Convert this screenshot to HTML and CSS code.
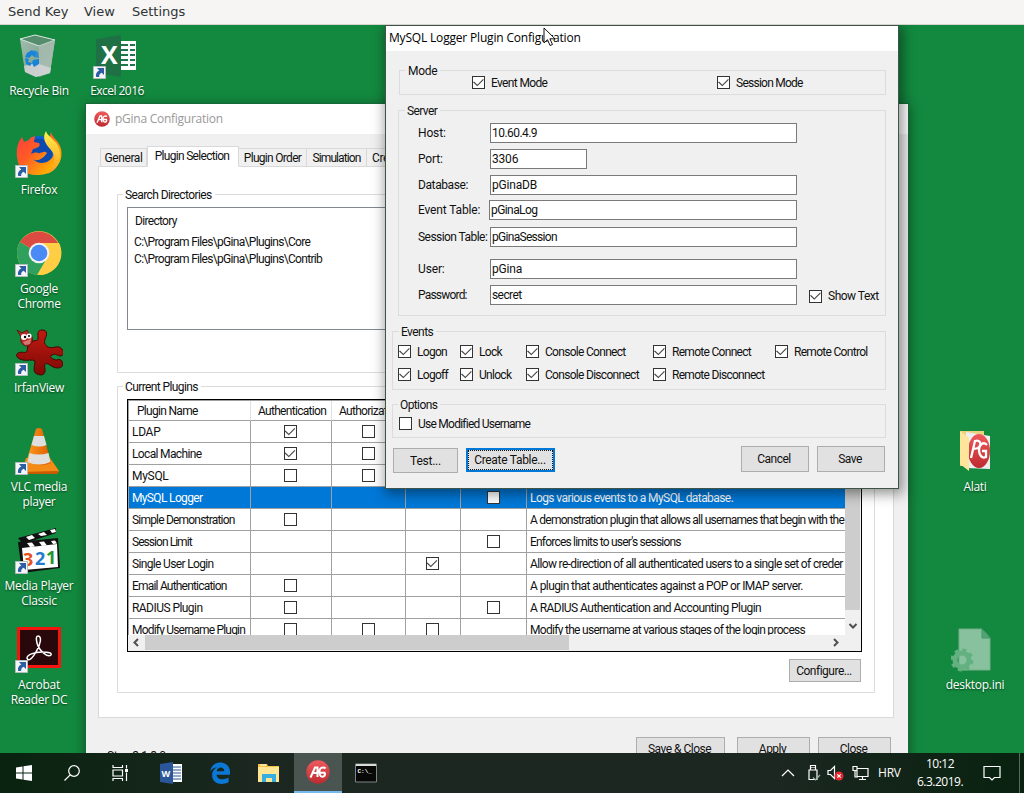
FILE: index.html
```html
<!DOCTYPE html>
<html lang="en">
<head>
<meta charset="utf-8">
<title>Remote desktop</title>
<link rel="stylesheet" href="styles.css">
</head>
<body>
<svg class="defs" aria-hidden="true">
  <defs>
    <linearGradient id="redball" x1="0" y1="0" x2="0" y2="1"><stop offset="0" stop-color="#ee5a5c"/><stop offset="1" stop-color="#bd2b31"/></linearGradient>
    <linearGradient id="fox" x1="0" y1="0" x2=".9" y2=".8"><stop offset="0" stop-color="#ff3b47"/><stop offset=".45" stop-color="#ff5a25"/><stop offset="1" stop-color="#ffb900"/></linearGradient>
    <linearGradient id="foxtail" x1="0" y1="0" x2="0" y2="1"><stop offset="0" stop-color="#fff04f"/><stop offset="1" stop-color="#ff9a1a"/></linearGradient>
    <linearGradient id="glass" x1="0" y1="0" x2="1" y2="1"><stop offset="0" stop-color="#a5bfb2"/><stop offset=".5" stop-color="#86a996"/><stop offset="1" stop-color="#b9c8bf"/></linearGradient>
    <linearGradient id="cone" x1="0" y1="0" x2="1" y2="0"><stop offset="0" stop-color="#ff9a1f"/><stop offset="1" stop-color="#dd5c00"/></linearGradient>
    <linearGradient id="splat" x1="0" y1="0" x2="0" y2="1"><stop offset="0" stop-color="#c01b12"/><stop offset="1" stop-color="#7f0805"/></linearGradient>
  </defs>
  <symbol id="pg" viewBox="0 0 24 24">
    <circle cx="12" cy="12" r="11.7" fill="url(#redball)"/>
    <path d="M4.500 17.500 9 7.500h2.500v9.500M7.500 13H11M19.500 8.500c-1.500-1.800-5.600-1.300-6 2.200-.4 4 1 6.100 3.200 6 2-.1 2.400-1.700 2.400-3.700M14 12.700h5.500" fill="none" stroke="#fff" stroke-width="2"/>
  </symbol>
  <symbol id="shortcut" viewBox="0 0 13 13">
    <path d="M.5.5h12v12H.5z" fill="#f3f5f7" stroke="#b5bcc0"/>
    <path d="M4 2h7v7L8.700 6.800C6.600 7.700 6 9 6.200 11H3.300C2.300 8 3.800 5.600 6.300 4.400Z" fill="#2d5da2"/>
  </symbol>
</svg>

<nav class="menubar"><span class="m1">Send Key</span><span class="m2">View</span><span class="m3">Settings</span></nav>

<main class="desktop">
  <section class="icons icons-left">
    <div class="shortcut">
      <svg viewBox="-2 0 48 48"><path d="M3 8 18 4l20 5-5 33-14 4-11-5Z" fill="url(#glass)"/><path d="M3 8 18 4l20 5-16 6Z" fill="#558d6d" stroke="#dae5df"/><path d="M22 15v31l11-4 5-33Z" fill="#a8bbb0" opacity=".8"/><path d="m7 35 12-3 15 5-1 5-14 4-11-5Z" fill="#d5d5d7" opacity=".85"/><g fill="#1685d9"><path d="m10 22 5-3 4 3-2 4-2-2-3 3-4-1Z"/><path d="m17 19 4 2 1 6-5-1Z" opacity=".8"/><path d="m8 27 4 1-1 3 4 1-2 3-4-2Z"/><path d="m16 29 6-1 0 5-5 3-2-4Z"/></g></svg>
      <span>Recycle Bin</span>
    </div>
    <div class="shortcut">
      <svg viewBox="0 0 48 48"><circle cx="24.500" cy="23" r="17" fill="#0b62d0"/><path d="M10 16c8-12 26-9 27 6s-14 18-22 14Z" fill="#10328e" opacity=".5"/><path d="M2 27C1 18 3 12 7 7l2 5 5-2c1-3 4-3 6-4l-1 6 5 1c2 3-1 5-6 6l-2 5c2-1 5-2 7-1 3 1 6-3 9 0-4 6-10 9-14 6 6 7 17 4 20-3 2-6 1-11-3-16 0-3 0-6 1-8 1 6 8 8 10 17 3 15-9 26-22 26C10 46 3 38 2 27Z" fill="url(#fox)"/><path d="M31 1c1 6 14 10 14 23 0 11-5 17-13 20 8-9 10-17 4-24-8-8-8-14-5-19Z" fill="url(#foxtail)"/><use href="#shortcut" x="0" y="35" width="13" height="13"/></svg>
      <span>Firefox</span>
    </div>
    <div class="shortcut">
      <svg viewBox="0 0 48 48"><circle cx="24" cy="24" r="22" fill="#f9d044"/><path d="M24 24 5 13A22 22 0 0 0 22 46l10-17Z" fill="#2fa05e"/><path d="M24 24 5 13A22 22 0 0 1 43 14H24Z" fill="#dc4b41"/><path d="M24 14h20a22 22 0 0 1-20 32l9-18Z" fill="#ffce44"/><circle cx="24" cy="24" r="10.300" fill="#f4f4f4"/><circle cx="24" cy="24" r="8.300" fill="#4a8af4"/><use href="#shortcut" x="0" y="35" width="13" height="13"/></svg>
      <span>Google<br>Chrome</span>
    </div>
    <div class="shortcut">
      <svg viewBox="0 0 48 48"><path d="M18 13c4-1 5 0 5-3 0-4-1-8 4-8 6 0 5 5 3 9-1 4 0 6 3 8 5 2 7-1 11 0 5 2 6 8 2 9-4 0-5-3-9-1-4 2 2 5 5 5 3-2 6 1 6 5-2 4-8 4-13 0-5-3-6-1-5 4 1 6-4 7-8 5-5-2-2-9-2-13-3-2-7 0-12-1-6-1-8-5-5-7 4-2 8 1 9-2 1-4 0-8 6-10Z" fill="url(#splat)" stroke="#420604"/><path d="m2 2 5 3 5-3 2 4c5 2 4 8 1 11-4 3-11-1-9-8Z" fill="#bb2a23" stroke="#54100c" stroke-width=".8"/><circle cx="9" cy="9" r="3" fill="#fff"/><circle cx="14" cy="8" r="2.600" fill="#fff"/><circle cx="10" cy="9" r="1.200"/><circle cx="14" cy="8" r="1"/><path d="m8 14 8-3-1 5-5 1Z" fill="#d37975"/><use href="#shortcut" x="0" y="35" width="13" height="13"/></svg>
      <span>IrfanView</span>
    </div>
    <div class="shortcut">
      <svg viewBox="0 0 48 48"><path d="M11 31h24l9 13-2 2H6l2-6Z" fill="#f38b16"/><path d="m6 45 36-1 2 1-2 2H7Z" fill="#c85b00"/><path d="M21 2q3-2 6 0l9 34q-12 5-25 0Z" fill="url(#cone)"/><path d="m19 9 10 0 2.500 9q-7 3-15 0ZM14.500 26q9 3 19 0l2 9q-12 5-23 0Z" fill="#dfdfdf"/><use href="#shortcut" x="0" y="35" width="13" height="13"/></svg>
      <span>VLC media<br>player</span>
    </div>
    <div class="shortcut">
      <svg viewBox="0 0 48 48"><path d="M3 12 41 2v5L8 18Z" fill="#111"/><path d="m11 11 6-2 3 3-6 2Zm12-3 6-2 3 3-6 1Zm12-4 5-1 1 3-4 1Z" fill="#fff"/><path d="M3 16 43 12l2 30-38 5Z" fill="#111"/><path d="m7 22 35-4 1 23-34 3Z" fill="#fff"/><path d="m12 17 5-.500 3 4-5 .500Zm12-1 5-.500 3 4-5 .500Zm12-1 4-.500 2 3-4 .500Z" fill="#fff"/><g class="numerals"><text x="8" y="40" fill="#e84f20">3</text><text x="20" y="39" fill="#247acc">2</text><text x="31" y="38" fill="#219630">1</text></g><use href="#shortcut" x="0" y="35" width="13" height="13"/></svg>
      <span>Media Player<br>Classic</span>
    </div>
    <div class="shortcut">
      <svg viewBox="0 0 48 48"><path d="M3.500 3.500h41v38h-41z" fill="#28080a" stroke="#f5140e" stroke-width="3"/><path d="M23 11c4 0 3 8-2 16-4 7-8 10-9 6 0-3 7-6 15-6 7 0 10 1 9 3-3 3-12-4-14-12-1-4-1-7 1-7Z" fill="none" stroke="#fff" stroke-width="1.500"/><use href="#shortcut" x="0" y="35" width="13" height="13"/></svg>
      <span>Acrobat<br>Reader DC</span>
    </div>
  </section>
  <section class="icons">
    <div class="shortcut">
      <svg viewBox="0 0 48 48"><path d="M27 10h16v29H27z" fill="#fff"/><path d="M27 14h15M27 19h15M27 24h15M27 29h15M27 34h15" stroke="#20744a" stroke-width="2"/><path d="M36 10v28" stroke="#fff" stroke-width="2"/><path d="m3 8 25-4v42L3 42Z" fill="#1f7145"/><text x="8" y="33" class="xl">X</text><use href="#shortcut" x="0" y="35" width="13" height="13"/></svg>
      <span class="k5">Excel 2016</span>
    </div>
  </section>
  <section class="icons icons-right">
    <div class="shortcut">
      <svg viewBox="0 0 48 48"><path d="M9 4h24v35H9Z" fill="#ead27f"/><path d="m15 5 24 4v33l-24-1Z" fill="#eee"/><ellipse cx="28" cy="24" rx="11" ry="17" fill="url(#redball)"/><path d="m20 31 4-17c6-2 7 5 3 7l-4 1M36 18c-4-4-8 0-8 5s3 9 7 7v-6h-4" fill="none" stroke="#fff" stroke-width="2.300"/><path d="m9 4 9 7v33l-9-7Z" fill="#ffe59b"/></svg>
      <span>Alati</span>
    </div>
    <div class="shortcut blank"></div>
    <div class="shortcut">
      <svg viewBox="2 0 48 48"><path d="M10 4h23l8 9v32H10Z" fill="#88c19d" stroke="#76af8b"/><path d="M33 4v9h8Z" fill="#52a474" stroke="#459768"/><circle cx="13" cy="35" r="7" fill="none" stroke="#63b080" stroke-width="5"/><circle cx="13" cy="35" r="10" fill="none" stroke="#63b080" stroke-width="3" stroke-dasharray="4 3.850"/></svg>
      <span>desktop.ini</span>
    </div>
  </section>

  <article class="window main-window">
    <header><svg><use href="#pg"/></svg>pGina Configuration</header>
    <div class="tabs"><span class="tab t1">General</span><span class="tab t2 selected">Plugin Selection</span><span class="tab t3">Plugin Order</span><span class="tab t4">Simulation</span><span class="tab t5">Cre</span></div>
    <div class="page">
      <fieldset class="search"><legend>Search Directories</legend>
        <div class="listbox"><p class="dir-head">Directory</p><p>C:\Program Files\pGina\Plugins\Core</p><p>C:\Program Files\pGina\Plugins\Contrib</p></div>
      </fieldset>
      <fieldset class="plugins"><legend>Current Plugins</legend>
        <div class="datagrid">
          <div class="viewport">
            <div class="row head"><b>Plugin Name</b><b>Authentication</b><b>Authorization</b><b></b><b></b><b></b></div>
            <div class="row"><b class="k3">LDAP</b><b><input type="checkbox" checked></b><b><input type="checkbox"></b><b></b><b></b><b></b></div>
            <div class="row"><b>Local Machine</b><b><input type="checkbox" checked></b><b><input type="checkbox"></b><b></b><b></b><b></b></div>
            <div class="row"><b class="k3">MySQL</b><b><input type="checkbox"></b><b><input type="checkbox"></b><b></b><b></b><b></b></div>
            <div class="row active"><b>MySQL Logger</b><b></b><b></b><b></b><b><input type="checkbox"></b><b class="k5">Logs various events to a MySQL database.</b></div>
            <div class="row"><b class="k8">Simple Demonstration</b><b><input type="checkbox"></b><b></b><b></b><b></b><b class="k75">A demonstration plugin that allows all usernames that begin with the</b></div>
            <div class="row"><b class="k9">Session Limit</b><b></b><b></b><b></b><b><input type="checkbox"></b><b class="k8">Enforces limits to user's sessions</b></div>
            <div class="row"><b>Single User Login</b><b></b><b></b><b><input type="checkbox" checked></b><b></b><b>Allow re-direction of all authenticated users to a single set of creder</b></div>
            <div class="row"><b class="k8">Email Authentication</b><b><input type="checkbox"></b><b></b><b></b><b></b><b class="k6">A plugin that authenticates against a POP or IMAP server.</b></div>
            <div class="row"><b class="k5">RADIUS Plugin</b><b><input type="checkbox"></b><b></b><b></b><b><input type="checkbox"></b><b class="k5">A RADIUS Authentication and Accounting Plugin</b></div>
            <div class="row"><b class="k8">Modify Username Plugin</b><b><input type="checkbox"></b><b><input type="checkbox"></b><b><input type="checkbox"></b><b></b><b class="k7">Modify the username at various stages of the login process</b></div>
          </div>
          <div class="vscroll"><i></i><svg viewBox="0 0 15 25"><path d="m4.500 14 3.500 3.500 3.500-3.500"/></svg></div>
          <div class="hscroll"><svg viewBox="0 0 16 15"><path d="M10 4 6.500 7.500 10 11"/></svg><i></i><svg viewBox="0 0 16 15"><path d="m7 4 3.500 3.500L7 11"/></svg></div>
        </div>
        <button class="configure">Configure...</button>
      </fieldset>
    </div>
    <footer><span class="version">Stop 3.1.8.0</span><button>Save &amp; Close</button><button>Apply</button><button>Close</button></footer>
  </article>

  <article class="window dialog">
    <header>MySQL Logger Plugin Configuration</header>
    <form>
      <fieldset class="mode"><legend class="k3">Mode</legend><label>Event Mode<input type="checkbox" checked></label><label>Session Mode<input type="checkbox" checked></label></fieldset>
      <fieldset class="server"><legend>Server</legend>
        <div class="field"><span>Host:</span><input class="k5" value="10.60.4.9"></div>
        <div class="field port"><span>Port:</span><input value="3306"></div>
        <div class="field"><span class="k4">Database:</span><input value="pGinaDB"></div>
        <div class="field evt"><span>Event Table:</span><input class="k6" value="pGinaLog"></div>
        <div class="field ses"><span class="k5">Session Table:</span><input class="k7" value="pGinaSession"></div>
        <div class="field usr"><span>User:</span><input value="pGina"></div>
        <div class="field"><span class="k8">Password:</span><input class="k6" value="secret"><label class="show">Show Text<input type="checkbox" checked></label></div>
      </fieldset>
      <fieldset class="events"><legend class="k5">Events</legend>
        <div class="event-grid">
          <label>Logon<input type="checkbox" checked></label><label>Lock<input type="checkbox" checked></label><label>Console Connect<input type="checkbox" checked></label><label>Remote Connect<input type="checkbox" checked></label><label>Remote Control<input type="checkbox" checked></label>
          <label>Logoff<input type="checkbox" checked></label><label>Unlock<input type="checkbox" checked></label><label>Console Disconnect<input type="checkbox" checked></label><label>Remote Disconnect<input type="checkbox" checked></label>
        </div>
      </fieldset>
      <fieldset class="options"><legend>Options</legend><label>Use Modified Username<input type="checkbox"></label></fieldset>
      <div class="actions"><button type="button" class="test">Test...</button><button type="button" class="create">Create Table...</button><button type="button" class="cancel">Cancel</button><button type="button" class="save">Save</button></div>
    </form>
  </article>
  <svg class="cursor" viewBox="0 0 13 20"><path d="M1 1v15l3.500-3.300L7 18.500l2.500-1-2.600-5.700H12Z" fill="#fff" stroke="#111"/></svg>
</main>

<footer class="taskbar">
  <div class="cell"><svg viewBox="0 0 16 16"><path d="m0 2.500 6.500-1V7.500H0Zm7.500-1.200L16 0v7.500H7.500ZM0 8.500h6.500v6L0 13.500Zm7.500 0H16V16l-8.500-1.300Z" fill="#fff"/></svg></div>
  <div class="cell"><svg viewBox="0 0 16 16" class="line"><circle cx="10" cy="6" r="5.300"/><path d="M6.200 9.800.5 15.500"/></svg></div>
  <div class="cell"><svg viewBox="0 0 16 16" class="line"><path d="M1 0v2.500h9.500V0M1 5h9.500v6H1ZM1 16v-2.500h9.500V16M14.500 0v3.500M14.500 7.500V16"/><path d="M13 4h3v3h-3z" fill="#fff" stroke="none"/></svg></div>
  <div class="cell gap first"><svg class="big" viewBox="0 0 24 24"><path d="M13 3h10v18H13z" fill="#fff"/><path d="M14 6h8M14 9h8M14 12h8M14 15h8M14 18h8" stroke="#2b579a"/><path d="M1 3 14 1v22L1 21Z" fill="#2b579a"/><text x="2.500" y="15.500" class="wd">W</text></svg></div>
  <div class="cell gap"><svg class="big" viewBox="0 0 24 24"><path d="M2 10.500C3.400 4.500 7.400 1.500 12.300 1.500c6 0 9.700 4.300 9.700 9.500v2.700H8.600c.2 5.400 7.400 5.500 12 2.900v4.700c-7.700 3.900-16.500 1-16.500-7 0-4.300 2.200-6.700 5.200-8.100C5.600 6.800 3.500 8.300 2 10.500Zm6.700-.2h7.600c0-5.100-7.100-4.700-7.600 0Z" fill="#0c78d5"/></svg></div>
  <div class="cell gap"><svg class="big" viewBox="0 0 24 24"><path d="M1 3h9l1 2h11v16H1z" fill="#f6c243"/><path d="M1 6h21v15H1z" fill="#ffe694"/><path d="M5 21v-8h14v8h-4v-4H9v4Z" fill="#35aee2"/><path d="M3 4h6" stroke="#fff"/></svg></div>
  <div class="cell gap running"><svg class="big"><use href="#pg"/></svg></div>
  <div class="cell"><svg class="big" viewBox="0 0 24 24"><path d="M1.500 3h21v18h-21z" fill="#080808" stroke="#7f8583"/><path d="M2 4h20" stroke="#d8dddb" stroke-width="2"/><text x="3.500" y="11.500" class="cmd">C:\_</text></svg></div>
  <div class="tray">
    <svg viewBox="0 0 14 8" class="line chev"><path d="m1 7 6-6 6 6"/></svg>
    <svg viewBox="0 0 14 18" class="line usb"><path d="M3.500 6V1.500h5V6M2 6h8v9.500H2zM5 3v1M7 3v1"/><path d="m6 13.500 2.500 2.500 4.500-5" stroke="#9bb3a3"/></svg>
    <svg viewBox="0 0 17 16" class="line vol"><path d="M1 5.500h2.500l4-4v12l-4-4H1Z"/><circle cx="12" cy="11" r="4.500" fill="#e32831" stroke="none"/><path d="m10.300 9.300 3.400 3.400m0-3.400-3.400 3.400"/></svg>
    <svg viewBox="0 0 17 16" class="line net"><path d="M5 3.500h11v8H5zM10.500 12v2.500M7 14.500h7M1 1.500h4v4H1zM3 6v6h3"/></svg>
    <span class="lang">HRV</span>
    <time><span>10:12</span><span>6.3.2019.</span></time>
    <svg viewBox="0 0 18 17" class="line note"><path d="M1 1.500h16v11h-5.500L9 15l-2.500-2.500H1Z"/></svg>
    <i class="peek"></i>
  </div>
</footer>
</body>
</html>
```
FILE: styles.css
```css
* { box-sizing: border-box; }
html, body { margin: 0; width: 1024px; height: 793px; overflow: hidden; }
body { display: flex; flex-direction: column; font: 12px/14px Roboto, "Liberation Sans", sans-serif; color: #111; background: #13893f; }
.defs { position: absolute; width: 0; height: 0; }
.menubar { flex: 0 0 25px; display: flex; background: #f6f5f4; border-bottom: 1px solid #d5d2ce; padding-left: 8px; font: 13px/24px "DejaVu Sans", sans-serif; color: #2e3436; }
.m1 { width: 76px; }
.m2 { width: 48px; }
.desktop { flex: 0 0 728px; position: relative; display: flex; background: #13893f; overflow: hidden; }

.icons { width: 78px; padding-top: 6px; display: flex; flex-direction: column; }
.icons-right { margin-left: auto; margin-right: 10px; padding-top: 402px; }
.shortcut { height: 99px; flex: none; display: flex; flex-direction: column; align-items: center; gap: 4px; color: #fff; text-align: center; white-space: nowrap; letter-spacing: -.28px; }
.shortcut svg { width: 48px; height: 48px; }
.shortcut span { font: 12px/15px "Open Sans", sans-serif; text-shadow: 0 1px 2px #033d17; }
.numerals { font: bold 18px "Open Sans", sans-serif; }
.xl { font: bold 25px "Open Sans", sans-serif; fill: #fff; }

.window { position: absolute; display: flex; flex-direction: column; background: #f0f0f0; }
.window header { background: #fff; font-family: "Open Sans", sans-serif; white-space: nowrap; letter-spacing: -.18px; }
.main-window { left: 86px; top: 79px; width: 822px; height: 700px; z-index: 1; box-shadow: 0 0 0 1px #17693a, 0 2px 12px rgba(0,0,0,.45); }
.main-window header { height: 30px; flex: none; display: flex; align-items: center; gap: 5px; padding-left: 8px; color: #999; line-height: 30px; letter-spacing: -.26px; }
.main-window header svg { width: 16px; height: 16px; }

.tabs { display: flex; align-items: flex-end; height: 33px; flex: none; padding-left: 14px; margin-bottom: -1px; z-index: 1; }
.tab { height: 19px; border: 1px solid #d9d9d9; border-left: 0; text-align: center; line-height: 19px; white-space: nowrap; overflow: hidden; letter-spacing: -.7px; }
.t1 { width: 47px; border-left: 1px solid #d9d9d9; letter-spacing: -.4px; }
.t2 { width: 92px; padding-right: 2px; }
.t3 { width: 68px; }
.t4 { width: 60px; letter-spacing: -.9px; }
.t5 { width: 110px; text-align: left; padding-left: 5px; letter-spacing: -.4px; }
.tab.selected { height: 21px; background: #fff; border-left: 1px solid #d9d9d9; border-bottom-color: #fff; line-height: 19px; }

.page { margin: 0 14px 0 12px; height: 552px; flex: none; background: #fff; border: 1px solid #d9d9d9; padding: 21px 18px 0; }
fieldset { margin: 0; min-width: 0; border: 1px solid #dcdcdc; padding: 0; }
legend { height: 13px; line-height: 14px; padding: 0 3px 0 2px; margin-left: 6px; white-space: nowrap; letter-spacing: -.6px; }
.search { height: 185px; width: 758px; margin-bottom: 7px; padding: 6px 10px 0 9px; }
.search legend, .plugins legend { margin-left: -4px; }
.listbox { height: 123px; border: 1px solid #828790; padding: 6px 7px; white-space: nowrap; letter-spacing: -.68px; }
.listbox p { margin: 0 0 0 -1px; line-height: 17px; }
.listbox .dir-head { line-height: 14px; margin: 0 0 6px; }
.plugins { height: 313px; width: 758px; padding: 6px 13px 0 9px; display: block; }
.datagrid { width: 735px; height: 253px; border: 1px solid #000; display: grid; grid-template: 235px 16px / 717px 16px; background: #f0f0f0; }
.viewport { overflow: hidden; background: #fff; border-left: 1px solid #a0a0a0; border-top: 1px solid #a0a0a0; }
.row { display: grid; grid-template-columns: 122px 81px 74px 55px 66px 318px; height: 22px; letter-spacing: -.65px; }
.row b { font-weight: normal; border-right: 1px solid #a0a0a0; border-bottom: 1px solid #a0a0a0; padding-left: 3px; line-height: 22px; white-space: nowrap; overflow: hidden; }
.row b:last-child { border-right: 0; }
.row b:nth-child(n+2):nth-child(-n+5) { display: flex; align-items: center; justify-content: center; padding: 0 2px 0 0; }
.row b:nth-child(3), .row b:nth-child(5) { padding-right: 0 !important; }
.row.head { height: 20px; letter-spacing: -.7px; }
.row.head b { border-right-color: #e0e0e0; line-height: 20px; padding-left: 8px; }
.row.head b:nth-child(n+2):nth-child(-n+5) { justify-content: flex-start; padding-left: 7px; }
.row.active b { background: #0078d7; color: #fff; }
.vscroll { display: flex; flex-direction: column; }
.vscroll i { height: 210px; width: 15px; flex: none; background: #cdcdcd; }
.vscroll svg { width: 15px; height: 25px; flex: none; }
.hscroll { grid-column: 1 / 3; display: flex; }
.hscroll i { width: 424px; height: 15px; background: #cdcdcd; margin: 0 258px 0 1px; }
.hscroll svg { width: 16px; height: 15px; }
.vscroll svg, .hscroll svg { fill: none; stroke: #505050; stroke-width: 2; }

button { font: inherit; color: #111; background: #e1e1e1; border: 1px solid #adadad; padding: 0; letter-spacing: -.5px; white-space: nowrap; }
.configure { display: block; width: 72px; height: 23px; margin: 7px 0 0 662px; padding-right: 2px; }
.main-window footer { display: flex; padding: 19px 17px 0 21px; }
.version { margin: 12px auto 0 0; letter-spacing: -.45px; }
.main-window footer button { height: 24px; width: 73px; margin-left: 8px; padding: 0 2px 1px 0; }
.main-window footer button:nth-of-type(1) { width: 89px; margin-right: 4px; }

.dialog { left: 385px; top: 0; width: 514px; height: 464px; z-index: 2; border: 1px solid #3f5547; box-shadow: 2px 3px 12px 2px rgba(0,0,0,.42); }
.dialog header { height: 25px; flex: none; line-height: 24px; padding-left: 3px; color: #000; }
.dialog form { padding: 13px 12px 0 6px; }
input { font: inherit; color: #111; margin: 0; }
input:not([type]) { width: 307px; height: 20px; border: 1px solid #7a7a7a; background: #fff; padding: 0 1px; }
[type=checkbox] { appearance: none; width: 13px; height: 13px; flex: none; border: 1px solid #333; background: #fff; }
[type=checkbox]:checked::before { content: ""; display: block; width: 11px; height: 11px; background: #444; clip-path: polygon(0 5.300px, 1px 4.400px, 4.300px 7.700px, 10px 2px, 10.800px 2.800px, 4.300px 9.300px); }
label { display: flex; flex-direction: row-reverse; justify-content: flex-end; align-items: center; gap: 6px; height: 13px; white-space: nowrap; letter-spacing: -.7px; }
.mode { height: 31px; margin-left: 7px; }
.mode label { float: left; width: 76px; margin: -1px 0 0 72px; letter-spacing: -.65px; }
.mode label + label { width: 90px; margin-left: 169px; letter-spacing: -.75px; }
.server { height: 212px; margin: 9px 0 0 6px; padding: 6px 0 0 19px; }
.server legend { margin-left: -13px; }
.field { display: flex; align-items: center; height: 20px; margin-bottom: 6px; letter-spacing: -.15px; }
.field > span { width: 72px; flex: none; white-space: nowrap; }
.field > input { flex: none; letter-spacing: -.2px; }
.port > input:not([type]) { width: 97px; }
.evt { margin: -1px 0 7px; }
.evt > span { width: 71px; }
.evt > input:not([type]) { width: 308px; }
.usr { margin-top: 12px; }
.show { margin: 2px 0 0 12px; height: 17px; width: 77px; background: #f0f0f0; z-index: 1; letter-spacing: -.5px; }
.events { height: 65px; margin-top: 9px; }
.event-grid { display: grid; grid-template-columns: 62px 66px 127px 122px 100px; row-gap: 10px; padding: 7px 0 0 5px; }
.options { height: 40px; margin-top: 8px; padding: 6px 0 0 6px; }
.options legend { margin-left: -1px; }
.options label { letter-spacing: -.75px; }
.actions { display: flex; align-items: flex-start; padding: 8px 1px 0 1px; }
.test { width: 65px; height: 25px; margin: 2px 8px 0 0; letter-spacing: -.25px; }
.create { width: 89px; height: 24px; margin-top: 2px; border: 2px solid #0078d7; outline: 1px dotted #111; outline-offset: -3px; letter-spacing: -.3px; padding-right: 1px; }
.cancel { width: 68px; height: 26px; margin-left: auto; padding-right: 2px; }
.save { width: 68px; height: 26px; margin-left: 8px; padding-right: 2px; }
.cursor { position: absolute; z-index: 3; left: 543px; top: 2px; width: 13px; height: 20px; }

/* Tracking steps for captions set tighter or looser than their container */
.row .k3, .k3 { letter-spacing: -.3px; }
.row .k4, .field > .k4 { letter-spacing: -.4px; }
.row .k5, .field > .k5, .k5 { letter-spacing: -.55px; }
.row .k6, .field > .k6 { letter-spacing: -.58px; }
.row .k7, .field > .k7 { letter-spacing: -.7px; }
.row .k75 { letter-spacing: -.75px; }
.row .k8, .field > .k8 { letter-spacing: -.8px; }
.row .k9 { letter-spacing: -.95px; }
.active > .k5 { letter-spacing: -.57px; }

.taskbar { flex: 0 0 40px; display: flex; background: linear-gradient(90deg, #09230f, #1b2720 25%, #1c2721 75%, #08220f); color: #fff; }
.cell { width: 48px; height: 40px; display: flex; align-items: center; justify-content: center; }
.cell.gap { margin-left: 1px; }
.cell.first { margin-left: 3px; }
.cell svg { width: 16px; height: 16px; }
.cell svg.big { width: 24px; height: 24px; }
.running { background: #4a5450; border-bottom: 2px solid #76b9ed; }
.line { fill: none; stroke: #fff; stroke-width: 1.200; }
.wd { font: bold 9px "Open Sans", sans-serif; fill: #fff; }
.cmd { font: bold 6px "Liberation Mono", monospace; fill: #fff; }
.tray { margin-left: auto; display: flex; align-items: center; font: 12px/18px "Open Sans", sans-serif; }
.chev { width: 14px; height: 8px; }
.usb { width: 14px; height: 18px; margin-left: 12px; }
.vol { width: 17px; height: 16px; margin-left: 6px; }
.net { width: 17px; height: 16px; margin-left: 8px; }
.lang { width: 24px; margin-left: 9px; letter-spacing: -.2px; }
.tray time { width: 56px; margin-left: 10px; display: flex; flex-direction: column; align-items: center; letter-spacing: -.5px; }
.note { width: 18px; height: 17px; margin-left: 15px; }
.peek { width: 1px; height: 40px; background: #59685e; margin: 0 4px 0 18px; }
```
